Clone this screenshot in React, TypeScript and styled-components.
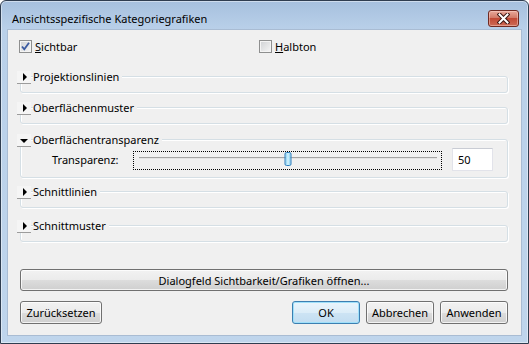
import * as React from "react";
import styled, { createGlobalStyle } from "styled-components";

const GlobalStyle = createGlobalStyle`
  html, body {
    margin: 0;
    padding: 0;
    background: #ffffff;
  }
  body {
    font-family: "Noto Sans", "Open Sans", sans-serif;
    font-size: 11px;
    color: #000;
  }
  * {
    box-sizing: border-box;
  }
`;

const Window = styled.div`
  width: 529px;
  height: 344px;
  display: flex;
  flex-direction: column;
  padding: 0 6px 7px 6px;
  border: 1px solid #2f3d50;
  border-radius: 6px 6px 0 0;
  background: linear-gradient(#a6c0de, #b9d0e9 28px, #bfd5ec);
  box-shadow: inset 0 0 0 1px rgba(255, 255, 255, 0.45);
`;

const TitleBar = styled.div`
  height: 28px;
  display: flex;
  align-items: center;
  justify-content: space-between;
  padding: 6px 3px 0 5px;
`;

const Title = styled.div`
  font-size: 11px;
  color: #000;
  white-space: nowrap;
`;

const CloseButton = styled.div`
  width: 31px;
  height: 17px;
  display: flex;
  align-items: center;
  justify-content: center;
  border: 1px solid #6f2a22;
  border-radius: 3px;
  background: linear-gradient(#e9a99b, #d27a68 45%, #c24a36 50%, #cc6a55);
  box-shadow: inset 0 0 0 1px rgba(255, 220, 210, 0.45);
`;

const Client = styled.div`
  flex: 1;
  display: flex;
  flex-direction: column;
  padding: 10px 13px 0 12px;
  background: #f0f0f0;
  border: 1px solid #a9bcd3;
`;

const CheckRow = styled.div`
  display: grid;
  grid-template-columns: 240px auto;
  margin-left: -1px;
  height: 13px;
`;

const CheckItem = styled.label`
  display: flex;
  align-items: center;
  gap: 3px;
  line-height: 13px;
  white-space: nowrap;
`;

const CheckBox = styled.span`
  width: 13px;
  height: 13px;
  display: flex;
  align-items: center;
  justify-content: center;
  border: 1px solid #8e8f8f;
  background: linear-gradient(135deg, #cfd1d4, #f6f6f6);
  box-shadow: inset 0 0 0 1px #f4f4f4;
`;

const GroupBox = styled.div<{ $top: number; $expanded?: boolean }>`
  display: flex;
  flex-direction: column;
  margin-top: ${(p) => p.$top}px;
  padding-bottom: ${(p) => (p.$expanded ? 6 : 8)}px;
  border: 1px solid #d5dfe5;
  border-radius: 3px;
  box-shadow: inset 1px 1px 0 #ffffff, 1px 1px 0 #ffffff;
`;

const GroupHeader = styled.div`
  align-self: flex-start;
  display: flex;
  align-items: center;
  height: 13px;
  margin: -6px 0 0 -4px;
`;

const Expander = styled.span`
  width: 14px;
  height: 13px;
  display: flex;
  align-items: center;
  justify-content: center;
  background: #f5f5f5;
  border-bottom: 1px solid #9c9c9c;
`;

const ArrowRight = styled.span`
  width: 0;
  height: 0;
  margin-left: 2px;
  border-left: 4px solid #000;
  border-top: 4px solid transparent;
  border-bottom: 4px solid transparent;
`;

const ArrowDown = styled.span`
  width: 0;
  height: 0;
  margin-top: 1px;
  border-top: 4px solid #000;
  border-left: 4px solid transparent;
  border-right: 4px solid transparent;
`;

const GroupLabel = styled.span`
  margin: 0 0 2px 2px;
  padding-right: 3px;
  line-height: 12px;
  background: #f0f0f0;
  white-space: nowrap;
`;

const SliderRow = styled.div`
  display: flex;
  align-items: flex-start;
  height: 23px;
  margin-top: 1px;
  padding-left: 31px;
`;

const FieldLabel = styled.span`
  width: 81px;
  line-height: 24px;
  white-space: nowrap;
`;

const SliderFrame = styled.div`
  width: 309px;
  height: 19px;
  margin-top: 3px;
  padding: 5px 4px 0 5px;
  border: 1px dotted #000;
`;

const Track = styled.div`
  position: relative;
  height: 2px;
  border-top: 1px solid #a4a4a4;
  border-bottom: 1px solid #e4e4e4;
`;

const Thumb = styled.span`
  position: absolute;
  top: -6px;
  width: 7px;
  height: 14px;
  transform: translateX(-50%);
  border: 1px solid #2c7fbf;
  border-radius: 2px;
  background: linear-gradient(90deg, #7ccdf0, #d8f3fd 50%, #7ccdf0);
`;

const ValueBox = styled.div`
  width: 41px;
  height: 23px;
  margin-left: 10px;
  padding-left: 5px;
  line-height: 21px;
  background: #fff;
  border: 1px solid #e2e3ea;
  border-top-color: #c9ccd4;
`;

const Button = styled.div<{ $primary?: boolean; $width?: number }>`
  width: ${(p) => (p.$width ? `${p.$width}px` : "auto")};
  height: 23px;
  display: flex;
  align-items: center;
  justify-content: center;
  white-space: nowrap;
  border: 1px solid ${(p) => (p.$primary ? "#3c7fb1" : "#707070")};
  border-radius: 3px;
  background: ${(p) =>
    p.$primary
      ? "linear-gradient(#eaf5fc, #dcedf8 50%, #cde4f4 51%, #c2ddf1)"
      : "linear-gradient(#f2f2f2, #ebebeb 50%, #dddddd 51%, #cfcfcf)"};
  box-shadow: ${(p) =>
    p.$primary
      ? "inset 0 0 0 1px #9fe0fa"
      : "inset 0 0 0 1px rgba(255, 255, 255, 0.75)"};
`;

const WideButton = styled(Button)`
  height: 22px;
  margin-top: 27px;
`;

const ButtonBar = styled.div`
  display: flex;
  gap: 6px;
  margin-top: 10px;
`;

const Spacer = styled.div`
  flex: 1;
`;

const groups = [
  { label: "Projektionslinien", top: 23 },
  { label: "Oberflächenmuster", top: 14 },
  { label: "Oberflächentransparenz", top: 15, expanded: true },
  { label: "Schnittlinien", top: 13 },
  { label: "Schnittmuster", top: 17 },
];

const CheckMark = () => (
  <svg width="11" height="11" viewBox="0 0 11 11">
    <path d="M2 5.5 L4.3 8.3 L9 1.8" fill="none" stroke="#3a5aa0" strokeWidth="1.8" />
  </svg>
);

const CloseGlyph = () => (
  <svg width="13" height="11" viewBox="0 0 13 11">
    <path d="M2.5 1.5 L10.5 9.5 M10.5 1.5 L2.5 9.5" stroke="#3a1511" strokeWidth="4" strokeLinecap="square" />
    <path d="M2.5 1.5 L10.5 9.5 M10.5 1.5 L2.5 9.5" stroke="#ffffff" strokeWidth="2" strokeLinecap="square" />
  </svg>
);

const App = () => (
  <>
    <GlobalStyle />
    <Window>
      <TitleBar>
        <Title>Ansichtsspezifische Kategoriegrafiken</Title>
        <CloseButton>
          <CloseGlyph />
        </CloseButton>
      </TitleBar>
      <Client>
        <CheckRow>
          <CheckItem>
            <CheckBox>
              <CheckMark />
            </CheckBox>
            <span>
              <u>S</u>ichtbar
            </span>
          </CheckItem>
          <CheckItem>
            <CheckBox />
            <span>
              <u>H</u>albton
            </span>
          </CheckItem>
        </CheckRow>

        {groups.map((g) => (
          <GroupBox key={g.label} $top={g.top} $expanded={g.expanded}>
            <GroupHeader>
              <Expander>{g.expanded ? <ArrowDown /> : <ArrowRight />}</Expander>
              <GroupLabel>{g.label}</GroupLabel>
            </GroupHeader>
            {g.expanded && (
              <SliderRow>
                <FieldLabel>Transparenz:</FieldLabel>
                <SliderFrame>
                  <Track>
                    <Thumb style={{ left: "50%" }} />
                  </Track>
                </SliderFrame>
                <ValueBox>50</ValueBox>
              </SliderRow>
            )}
          </GroupBox>
        ))}

        <WideButton>Dialogfeld Sichtbarkeit/Grafiken öffnen...</WideButton>

        <ButtonBar>
          <Button $width={82}>Zurücksetzen</Button>
          <Spacer />
          <Button $width={68} $primary>
            OK
          </Button>
          <Button $width={68}>Abbrechen</Button>
          <Button $width={68}>Anwenden</Button>
        </ButtonBar>
      </Client>
    </Window>
  </>
);

export default App;
